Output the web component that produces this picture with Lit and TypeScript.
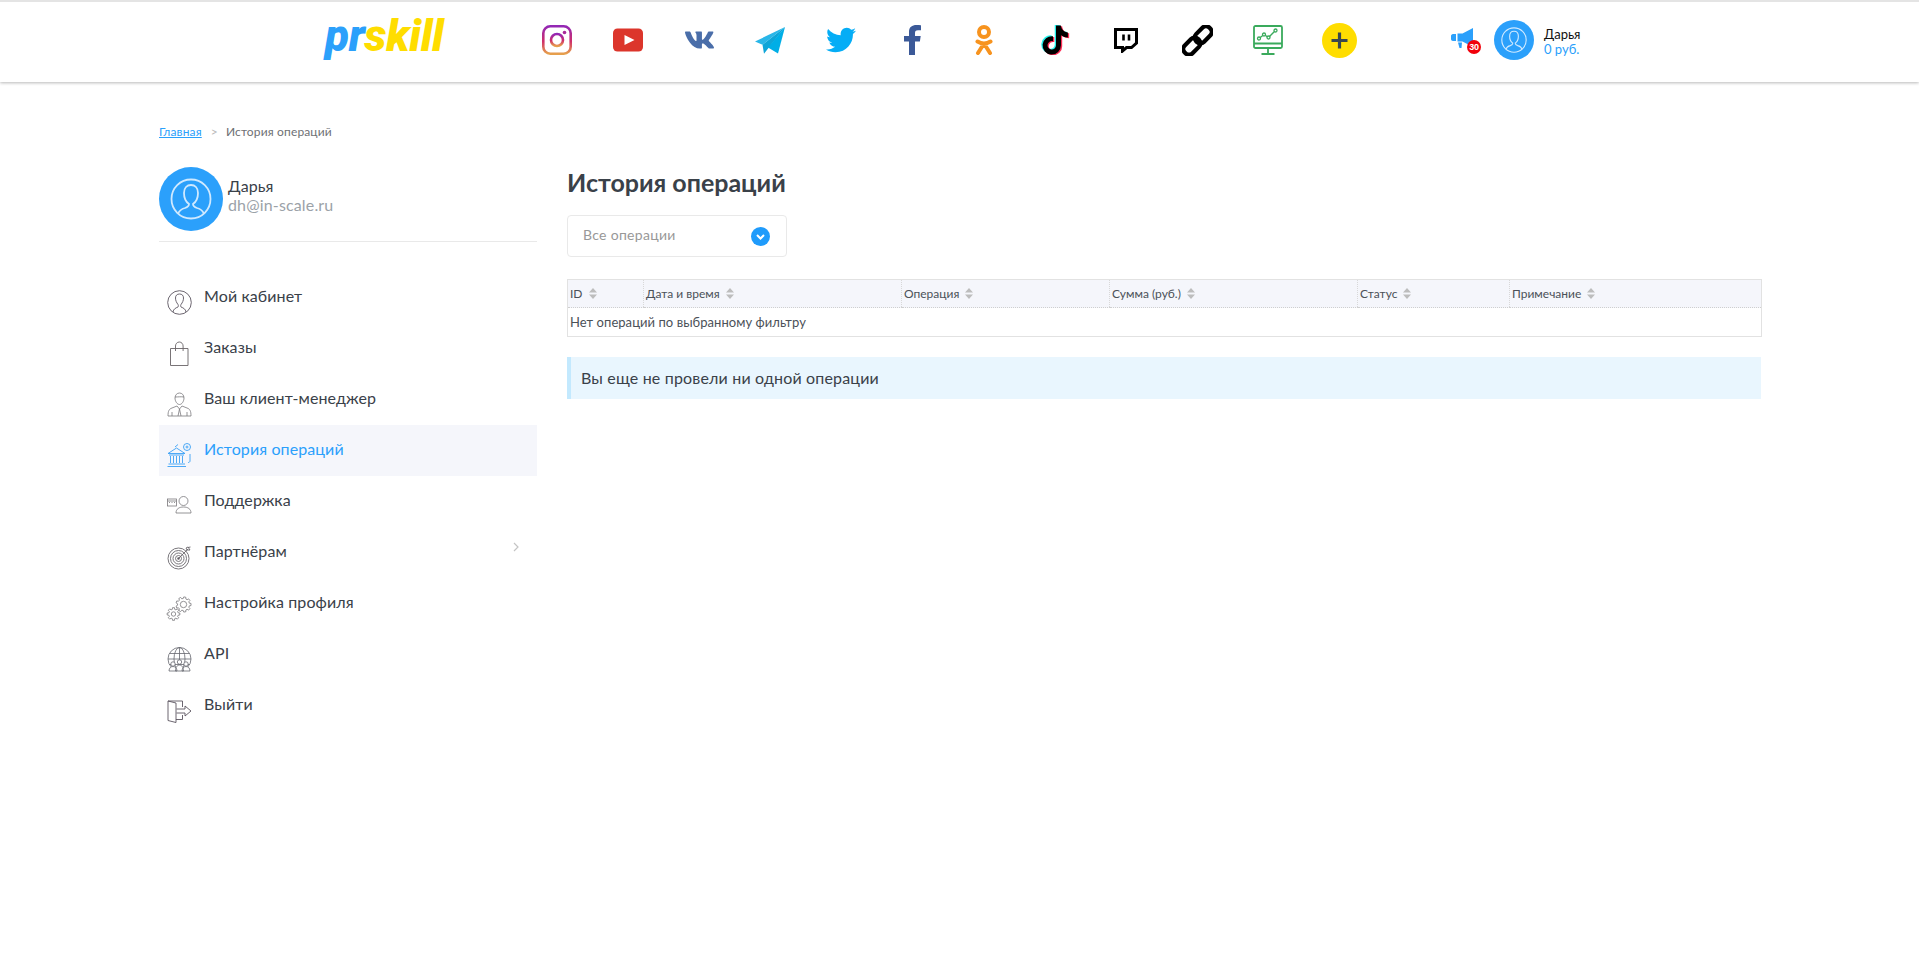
import { LitElement, html, css, svg } from "lit";
import { customElement } from "lit/decorators.js";

const avatarGlyph = svg`
  <circle cx="32" cy="32" r="19.5" fill="none" stroke="#cfe9ff" stroke-width="1.8"/>
  <path d="M19 47c1-3 3-5 7-6 3-1 4-2 4-4-3-2-5-6-5-11 0-5 3-8 7-8s7 3 7 8c0 5-2 9-5 11 0 2 1 3 4 4 4 1 6 3 7 6" fill="none" stroke="#cfe9ff" stroke-width="1.8"/>`;

function gear(cx: number, cy: number, r: number, n: number): string {
  const pts: string[] = [];
  const step = (Math.PI * 2) / n;
  for (let i = 0; i < n; i++) {
    const a = i * step;
    const outer = r + 1.6;
    [[-0.32, r], [-0.2, outer], [0.2, outer], [0.32, r]].forEach(([k, rad]) => {
      const t = a + k * step;
      pts.push(`${(cx + Math.cos(t) * rad).toFixed(2)} ${(cy + Math.sin(t) * rad).toFixed(2)}`);
    });
  }
  return "M" + pts.join("L") + "Z";
}

const socials = [
  svg`<svg width="30" height="30" viewBox="0 0 30 30"><defs><linearGradient id="ig" x1="0" y1="0" x2="0" y2="1"><stop offset="0" stop-color="#9327b5"/><stop offset=".55" stop-color="#cf2f6a"/><stop offset="1" stop-color="#e6a04c"/></linearGradient></defs><rect x="1.3" y="1.3" width="27.4" height="27.4" rx="7" fill="none" stroke="url(#ig)" stroke-width="2.6"/><circle cx="15" cy="15" r="6" fill="none" stroke="url(#ig)" stroke-width="2.6"/><circle cx="22.5" cy="7.5" r="1.8" fill="#a82a9a"/></svg>`,
  svg`<svg width="30" height="24" viewBox="0 0 30 24"><rect x="0" y="0.5" width="30" height="23" rx="4.5" fill="#dc352b"/><path d="M11.5 7l10 5-10 5z" fill="#fff"/></svg>`,
  svg`<svg class="vk" width="31" height="28" viewBox="0 0 576 512"><path fill="#4a6ea9" d="M545 117.7c3.7-12.5 0-21.7-17.8-21.7h-58.9c-15 0-21.9 7.9-25.6 16.7 0 0-30 73.6-72.4 121.2-13.7 13.7-20 18.1-27.5 18.1-3.7 0-9.4-4.4-9.4-16.9V117.7c0-15-4.2-21.7-16.6-21.7h-92.6c-9.4 0-15 7-15 13.5 0 14.2 21.2 17.5 23.4 57.5v86.8c0 19-3.4 22.5-10.9 22.5-20 0-68.6-73.4-97.4-157.4-5.8-16.3-11.5-22.9-26.6-22.9H38.8c-16.8 0-20.2 7.9-20.2 16.7 0 15.6 20 93.1 93.1 195.5C160.4 378.1 229 416 291.4 416c37.5 0 42.1-8.4 42.1-22.9 0-66.8-3.4-73.1 15.4-73.1 8.7 0 23.7 4.4 58.7 38.1 40 40 46.6 57.9 69 57.9h58.9c16.8 0 25.3-8.4 20.4-25-11.2-34.9-86.9-106.7-90.3-111.5-8.7-11.2-6.2-16.2 0-26.2.1-.1 72-101.3 79.4-135.6z"/></svg>`,
  svg`<svg width="30" height="27" viewBox="0 0 30 27"><path d="M30 0L0 14.5l7.5 3.2z" fill="#29b6e8"/><path d="M30 0L7.5 17.7l1.5 9 4.5-5.8z" fill="#0ea5d8"/><path d="M30 0L13 20.5l10 6z" fill="#00aee6"/></svg>`,
  svg`<svg width="30" height="30" viewBox="0 0 512 512"><path fill="#05adf6" d="M459.37 151.716c.325 4.548.325 9.097.325 13.645 0 138.72-105.583 298.558-298.558 298.558-59.452 0-114.68-17.219-161.137-47.106 8.447.974 16.568 1.299 25.34 1.299 49.055 0 94.213-16.568 130.274-44.832-46.132-.975-84.792-31.188-98.112-72.772 6.498.974 12.995 1.624 19.818 1.624 9.421 0 18.843-1.3 27.614-3.573-48.081-9.747-84.143-51.98-84.143-102.985v-1.299c13.969 7.797 30.214 12.67 47.431 13.319-28.264-18.843-46.781-51.005-46.781-87.391 0-19.492 5.197-37.36 14.294-52.954 51.655 63.675 129.3 105.258 216.365 109.807-1.624-7.797-2.599-15.918-2.599-24.04 0-57.828 46.782-104.934 104.934-104.934 30.213 0 57.502 12.67 76.67 33.137 23.715-4.548 46.456-13.32 66.599-25.34-7.798 24.366-24.366 44.833-46.132 57.827 21.117-2.273 41.584-8.122 60.426-16.243-14.292 20.791-32.161 39.308-52.628 54.253z"/></svg>`,
  svg`<svg width="17" height="30" viewBox="0 0 17 30"><path fill="#3b5998" d="M5 30V16.500H0V11h5V7c0-5 3-7 7.500-7 2 0 3.500.2 4.500.3v5h-3c-2.500 0-3 1.200-3 3V11h5.700l-.8 5.500H11V30z"/></svg>`,
  svg`<svg width="18" height="30" viewBox="0 0 18 30"><circle cx="9" cy="7" r="5" fill="none" stroke="#f7931e" stroke-width="4"/><path d="M2.500 16.500c4 2.400 9 2.400 13 0M9 18.500L3 28M9 18.500L15 28" fill="none" stroke="#f7931e" stroke-width="4" stroke-linecap="round"/></svg>`,
  svg`<svg width="30" height="30" viewBox="-30 -10 500 530"><path fill="#25f4ee" transform="translate(-22 -14)" d="M448,209.91a210.06,210.06,0,0,1-122.77-39.25V349.38A162.55,162.55,0,1,1,185,188.31V278.2a74.62,74.62,0,1,0,52.23,71.18V0l88,0a121.18,121.18,0,0,0,1.86,22.17h0A122.18,122.18,0,0,0,381,102.39a121.43,121.43,0,0,0,67,20.14Z"/><path fill="#fe2c55" transform="translate(22 14)" d="M448,209.91a210.06,210.06,0,0,1-122.77-39.25V349.38A162.55,162.55,0,1,1,185,188.31V278.2a74.62,74.62,0,1,0,52.23,71.18V0l88,0a121.18,121.18,0,0,0,1.86,22.17h0A122.18,122.18,0,0,0,381,102.39a121.43,121.43,0,0,0,67,20.14Z"/><path fill="#000" d="M448,209.91a210.06,210.06,0,0,1-122.77-39.25V349.38A162.55,162.55,0,1,1,185,188.31V278.2a74.62,74.62,0,1,0,52.23,71.18V0l88,0a121.18,121.18,0,0,0,1.86,22.17h0A122.18,122.18,0,0,0,381,102.39a121.43,121.43,0,0,0,67,20.14Z"/></svg>`,
  svg`<svg width="24" height="25" viewBox="0 0 24 25"><path d="M1.500 1.500h21v13.500l-5 4.500h-5l-4 3.500v-3.500H1.500z" fill="none" stroke="#000" stroke-width="3" stroke-linejoin="miter"/><path d="M9.500 6.500v6M15 6.500v6" stroke="#000" stroke-width="2.600"/></svg>`,
  svg`<svg width="31" height="31" viewBox="0 0 31 31"><g fill="none" stroke="#000" stroke-width="4.200" transform="rotate(-45 15.500 15.500)"><rect x="-2" y="10" width="19" height="11" rx="5"/><rect x="14" y="10" width="19" height="11" rx="5"/></g></svg>`,
  svg`<svg width="30" height="30" viewBox="0 0 30 30" fill="none" stroke="#3aaa5c" stroke-width="1.800"><rect x="1" y="1" width="28" height="22" rx="1.500"/><path d="M1 18.500h28M15 23.500v4.500M8.500 29h13"/><path d="M6 13.500l5-4 4.500 3 7-7" stroke-width="1.400"/><circle cx="6" cy="13.500" r="1.500" fill="#fff" stroke-width="1.300"/><circle cx="11" cy="9.500" r="1.500" fill="#fff" stroke-width="1.300"/><circle cx="15.500" cy="12.500" r="1.500" fill="#fff" stroke-width="1.300"/><circle cx="22.500" cy="5.500" r="1.500" fill="#fff" stroke-width="1.300"/></svg>`,
  svg`<svg width="35" height="35" viewBox="0 0 35 35"><circle cx="17.500" cy="17.500" r="17.500" fill="#ffdd00"/><path d="M17.500 9.500v16M9.500 17.500h16" stroke="#39464f" stroke-width="3.200"/></svg>`,
];

const menu: { label: string; icon: unknown; active?: boolean; chevron?: boolean }[] = [
  { label: "Мой кабинет", icon: svg`<g fill="none" stroke="#5b5560" stroke-width=".9"><circle cx="12.500" cy="12.500" r="11.800"/><path d="M6 22c.5-3 2.500-4 5-5 .5-1 .5-1.500 0-2.500-1.500-2-2.500-4-2.500-6.500 0-2.500 1.500-4 4-4s4 1.500 4 4c0 2.500-1 4.500-2.500 6.500-.5 1-.5 1.500 0 2.500 2.500 1 4.500 2 5 5"/></g>` },
  { label: "Заказы", icon: svg`<g fill="none" stroke="#6a6468" stroke-width=".9"><path d="M3.500 7.500h17.500v17H3.500z"/><path d="M8.500 10V5c0-2 1.500-4 3.800-4s3.800 2 3.800 4v5"/></g>` },
  { label: "Ваш клиент-менеджер", icon: svg`<g fill="none" stroke="#7a787c" stroke-width=".8"><path d="M8 6c0-3 2-5 4.500-5S17 3 17 6c0 3-2 6.500-4.500 6.500S8 9 8 6z"/><path d="M8 5c3 0 6-.5 9 0"/><path d="M1 24c0-5 1-7 4-8l5-2 2.500 3 2.500-3 5 2c3 1 4 3 4 8z"/><path d="M12.500 17l-1.500 7M12.500 17l1.500 7M5 20v4M20 20v4"/></g>` },
  { label: "История операций", active: true, icon: svg`<g fill="none" stroke="#3aa0f5" stroke-width=".9"><path d="M1 10.500L9.500 5l8.500 5.500z"/><path d="M2 12h15M3.500 13v7M6.500 13v7M9.500 13v7M12.500 13v7M15.500 13v7M1.500 21h16.500M.5 23.500h18.500"/><circle cx="20" cy="4" r="3.500"/><circle cx="20" cy="4" r="1"/><path d="M23 11v7c0 1-1 1.500-2 1.500M8 4l3-2.500"/></g>` },
  { label: "Поддержка", icon: svg`<g fill="none" stroke="#7a787c" stroke-width=".8"><rect x="0.500" y="5" width="9" height="7"/><path d="M2 8.500h1M4.500 8.500h1M7 8.500h1M.5 7h9"/><circle cx="16.500" cy="7" r="4.500"/><path d="M9 19c0-4 3-6 7.500-6S24 15 24 19z"/></g>` },
  { label: "Партнёрам", chevron: true, icon: svg`<g fill="none" stroke="#6a666c" stroke-width=".9"><circle cx="11.500" cy="13.500" r="10.500"/><circle cx="11.500" cy="13.500" r="8"/><circle cx="11.500" cy="13.500" r="5.500"/><circle cx="11.500" cy="13.500" r="3"/><path d="M11.500 13.500L21 4M19 3l1 2 3 0-2-3zM21 2.500l2.500-.5"/></g><circle cx="11.500" cy="13.500" r="1.200" fill="#5f5a62"/>` },
  { label: "Настройка профиля", icon: svg`<g fill="none" stroke="#7a787c" stroke-width=".8"><path d="${gear(16.5, 8.5, 6, 9)}"/><circle cx="16.500" cy="8.500" r="3.200"/><path d="${gear(6.5, 18, 4.8, 8)}" fill="#fff"/><circle cx="6.500" cy="18" r="2.200"/></g>` },
  { label: "API", icon: svg`<g fill="none" stroke="#66676e" stroke-width=".8"><circle cx="12.500" cy="12" r="11.500"/><ellipse cx="12.500" cy="12" rx="5.500" ry="11.500"/><path d="M12.500 .5v23M1 12h23M2.500 6.500h20M2.500 17.500h20"/><circle cx="6" cy="17" r="2.200" fill="#fff"/><circle cx="12.500" cy="15" r="2.200" fill="#fff"/><circle cx="19" cy="17" r="2.200" fill="#fff"/><path d="M2 24c0-3 2-4.500 4-4.500s4 1.500 4 4.500zM8.500 24c0-4 2-6 4-6s4 2 4 6zM15 24c0-3 2-4.500 4-4.500s4 1.500 4 4.500z" fill="#fff"/></g>` },
  { label: "Выйти", icon: svg`<g fill="none" stroke="#5b5560" stroke-width=".9"><path d="M1 3h14.500v6M15.500 17v4.500H9"/><path d="M1 3l8 2v19.500l-8-2z"/><path d="M9.500 11h8.500V8l6 5-6 5v-3H9.500"/></g>` },
];

const columns = [
  { label: "ID", w: 76 },
  { label: "Дата и время", w: 258 },
  { label: "Операция", w: 208 },
  { label: "Сумма (руб.)", w: 248 },
  { label: "Статус", w: 152 },
  { label: "Примечание", w: 252 },
];

@customElement("app-root")
export class AppRoot extends LitElement {
  static styles = css`
    :host { display: block; min-height: 963px; background: #fff; font-family: Lato, "Noto Sans", sans-serif; color: #3a4149; }
    * { box-sizing: border-box; }
    .header { height: 82px; border-top: 2px solid #e4e4e4; background: #fff; box-shadow: 0 1px 3px rgba(0,0,0,.28); display: flex; align-items: center; padding-bottom: 4px; }
    .logo { width: 196px; margin: 0 0 9px 325px; font: italic 900 44px/42px Roboto, "Liberation Sans", sans-serif; letter-spacing: -.3px; white-space: nowrap; }
    .logo .pr { color: #2ba0fb; }
    .logo .sk { color: #ffdd00; }
    .socials { display: grid; grid-template-columns: repeat(12, 71.2px); width: 854px; }
    .soc { display: flex; align-items: center; justify-content: center; }
    .soc svg { display: block; }
    .soc .vk { margin-left: 2px; }
    .user { display: flex; align-items: center; margin-left: 76px; }
    .mega { position: relative; width: 30px; height: 24px; margin-right: 13px; }
    .badge { position: absolute; right: 0; bottom: -2px; width: 14px; height: 14px; border-radius: 50%; background: #f1000b; color: #fff; font: 700 9px/14px "Liberation Sans", sans-serif; letter-spacing: -.3px; text-align: center; }
    .uname { margin-left: 10px; padding-top: 3px; font-size: 13px; line-height: 15px; color: #111; }
    .ubal { color: #2ba0fb; font-size: 13px; }
    .wrap { padding: 43px 158px 0 159px; }
    .crumbs { font-size: 12px; line-height: 14px; letter-spacing: .15px; color: #6e7074; height: 14px; display: flex; }
    .crumbs a { color: #2ba0fb; text-decoration: underline; }
    .crumbs .sep { color: #b9b9b9; margin: 0 8px 0 9px; }
    .cols { display: flex; gap: 30px; margin-top: 29px; }
    .side { width: 378px; flex: none; }
    .profile { display: flex; align-items: center; gap: 5px; height: 75px; padding-bottom: 11px; border-bottom: 1px solid #e9e9e9; margin-top: -1px; }
    .ptext { padding-bottom: 7px; font-size: 16px; line-height: 19px; letter-spacing: .15px; }
    .pname { color: #3a4149; }
    .pmail { color: #9ba2a8; }
    .menu { margin-top: 30px; }
    .item { position: relative; display: flex; height: 51px; padding: 0 0 0 8px; color: #3a4149; font-size: 16px; line-height: 20px; letter-spacing: .1px; }
    .item.active { background: #f5f6fb; color: #2ba0fb; }
    .ic { width: 25px; height: 25px; margin-top: 18px; flex: none; }
    .ic svg { display: block; overflow: visible; }
    .lbl { margin-left: 12px; padding-top: 14px; }
    .chev { position: absolute; right: 18px; top: 15px; }
    .main { flex: 1; min-width: 0; }
    h1 { margin: 0; font-size: 25px; line-height: 29px; font-weight: 700; color: #3a4149; }
    .select { width: 220px; height: 42px; margin-top: 18px; border: 1px solid #e9e9e9; border-radius: 4px; display: flex; align-items: center; justify-content: space-between; padding: 0 16px 0 15px; font-size: 14px; letter-spacing: .3px; color: #989898; }
    .select span { padding-bottom: 3px; }
    table { width: calc(100% - 1px); margin-top: 22px; border-collapse: collapse; table-layout: fixed; border: 1px solid #e2e2e2; font-size: 12px; }
    th { height: 28px; background: #f5f6fb; font-weight: 400; text-align: left; padding: 0 0 0 2px; color: #4b5158; border-left: 1px dotted #d8d8d8; border-bottom: 1px dotted #cfcfcf; border-top: 1px solid #e2e2e2; }
    th:first-child { border-left: none; }
    th svg { margin-left: 6px; vertical-align: -1px; }
    td { height: 29px; padding: 0 0 1px 2px; font-size: 13px; letter-spacing: .05px; color: #4b5158; }
    .alert { margin-top: 20px; height: 42px; background: #e9f6fe; border-left: 4px solid #c3e9fe; padding: 0 0 2px 10px; display: flex; align-items: center; font-size: 16px; letter-spacing: .17px; color: #3a4149; }
  `;

  render() {
    return html`
      <div class="header">
        <div class="logo"><span class="pr">pr</span><span class="sk">skill</span></div>
        <div class="socials">${socials.map((s) => html`<div class="soc">${s}</div>`)}</div>
        <div class="user">
          <div class="mega">
            <svg width="30" height="24" viewBox="0 0 30 24"><path d="M0 8c0-1 .8-2 2-2h3v7H2c-1.200 0-2-1-2-2zM6.500 5.500h5L22 0v19l-10.500-5.500h-5zM7 14.500h4l-.5 5.500H8.500z" fill="#2ba0fb"/></svg>
            <div class="badge">30</div>
          </div>
          <svg width="40" height="40" viewBox="0 0 64 64"><circle cx="32" cy="32" r="32" fill="#2ba0fb"/>${avatarGlyph}</svg>
          <div class="uname">Дарья<div class="ubal">0 руб.</div></div>
        </div>
      </div>
      <div class="wrap">
        <div class="crumbs"><a>Главная</a><span class="sep">&gt;</span><span>История операций</span></div>
        <div class="cols">
          <div class="side">
            <div class="profile">
              <svg width="64" height="64" viewBox="0 0 64 64"><circle cx="32" cy="32" r="32" fill="#2ba0fb"/>${avatarGlyph}</svg>
              <div class="ptext"><div class="pname">Дарья</div><div class="pmail">dh@in-scale.ru</div></div>
            </div>
            <div class="menu">
              ${menu.map((m) => html`
                <div class="item ${m.active ? "active" : ""}">
                  <div class="ic"><svg width="25" height="25" viewBox="0 0 25 25">${m.icon}</svg></div>
                  <div class="lbl">${m.label}</div>
                  ${m.chevron ? html`<svg class="chev" width="6" height="10" viewBox="0 0 6 10"><path d="M1 1l4 4-4 4" fill="none" stroke="#c4c4c4" stroke-width="1.200"/></svg>` : ""}
                </div>`)}
            </div>
          </div>
          <div class="main">
            <h1>История операций</h1>
            <div class="select">
              <span>Все операции</span>
              <svg width="19" height="19" viewBox="0 0 19 19"><circle cx="9.500" cy="9.500" r="9.500" fill="#1f9bfb"/><path d="M6 8l3.500 3.500L13 8" fill="none" stroke="#fff" stroke-width="2"/></svg>
            </div>
            <table>
              <colgroup>${columns.map((c) => html`<col style="width:${c.w}px" />`)}</colgroup>
              <thead><tr>${columns.map((c) => html`<th>${c.label}<svg width="8" height="11" viewBox="0 0 8 11"><path d="M4 0l4 4.500H0zM4 11L0 6.500h8z" fill="#bdbdbd"/></svg></th>`)}</tr></thead>
              <tbody><tr><td colspan="6">Нет операций по выбранному фильтру</td></tr></tbody>
            </table>
            <div class="alert">Вы еще не провели ни одной операции</div>
          </div>
        </div>
      </div>
    `;
  }
}
